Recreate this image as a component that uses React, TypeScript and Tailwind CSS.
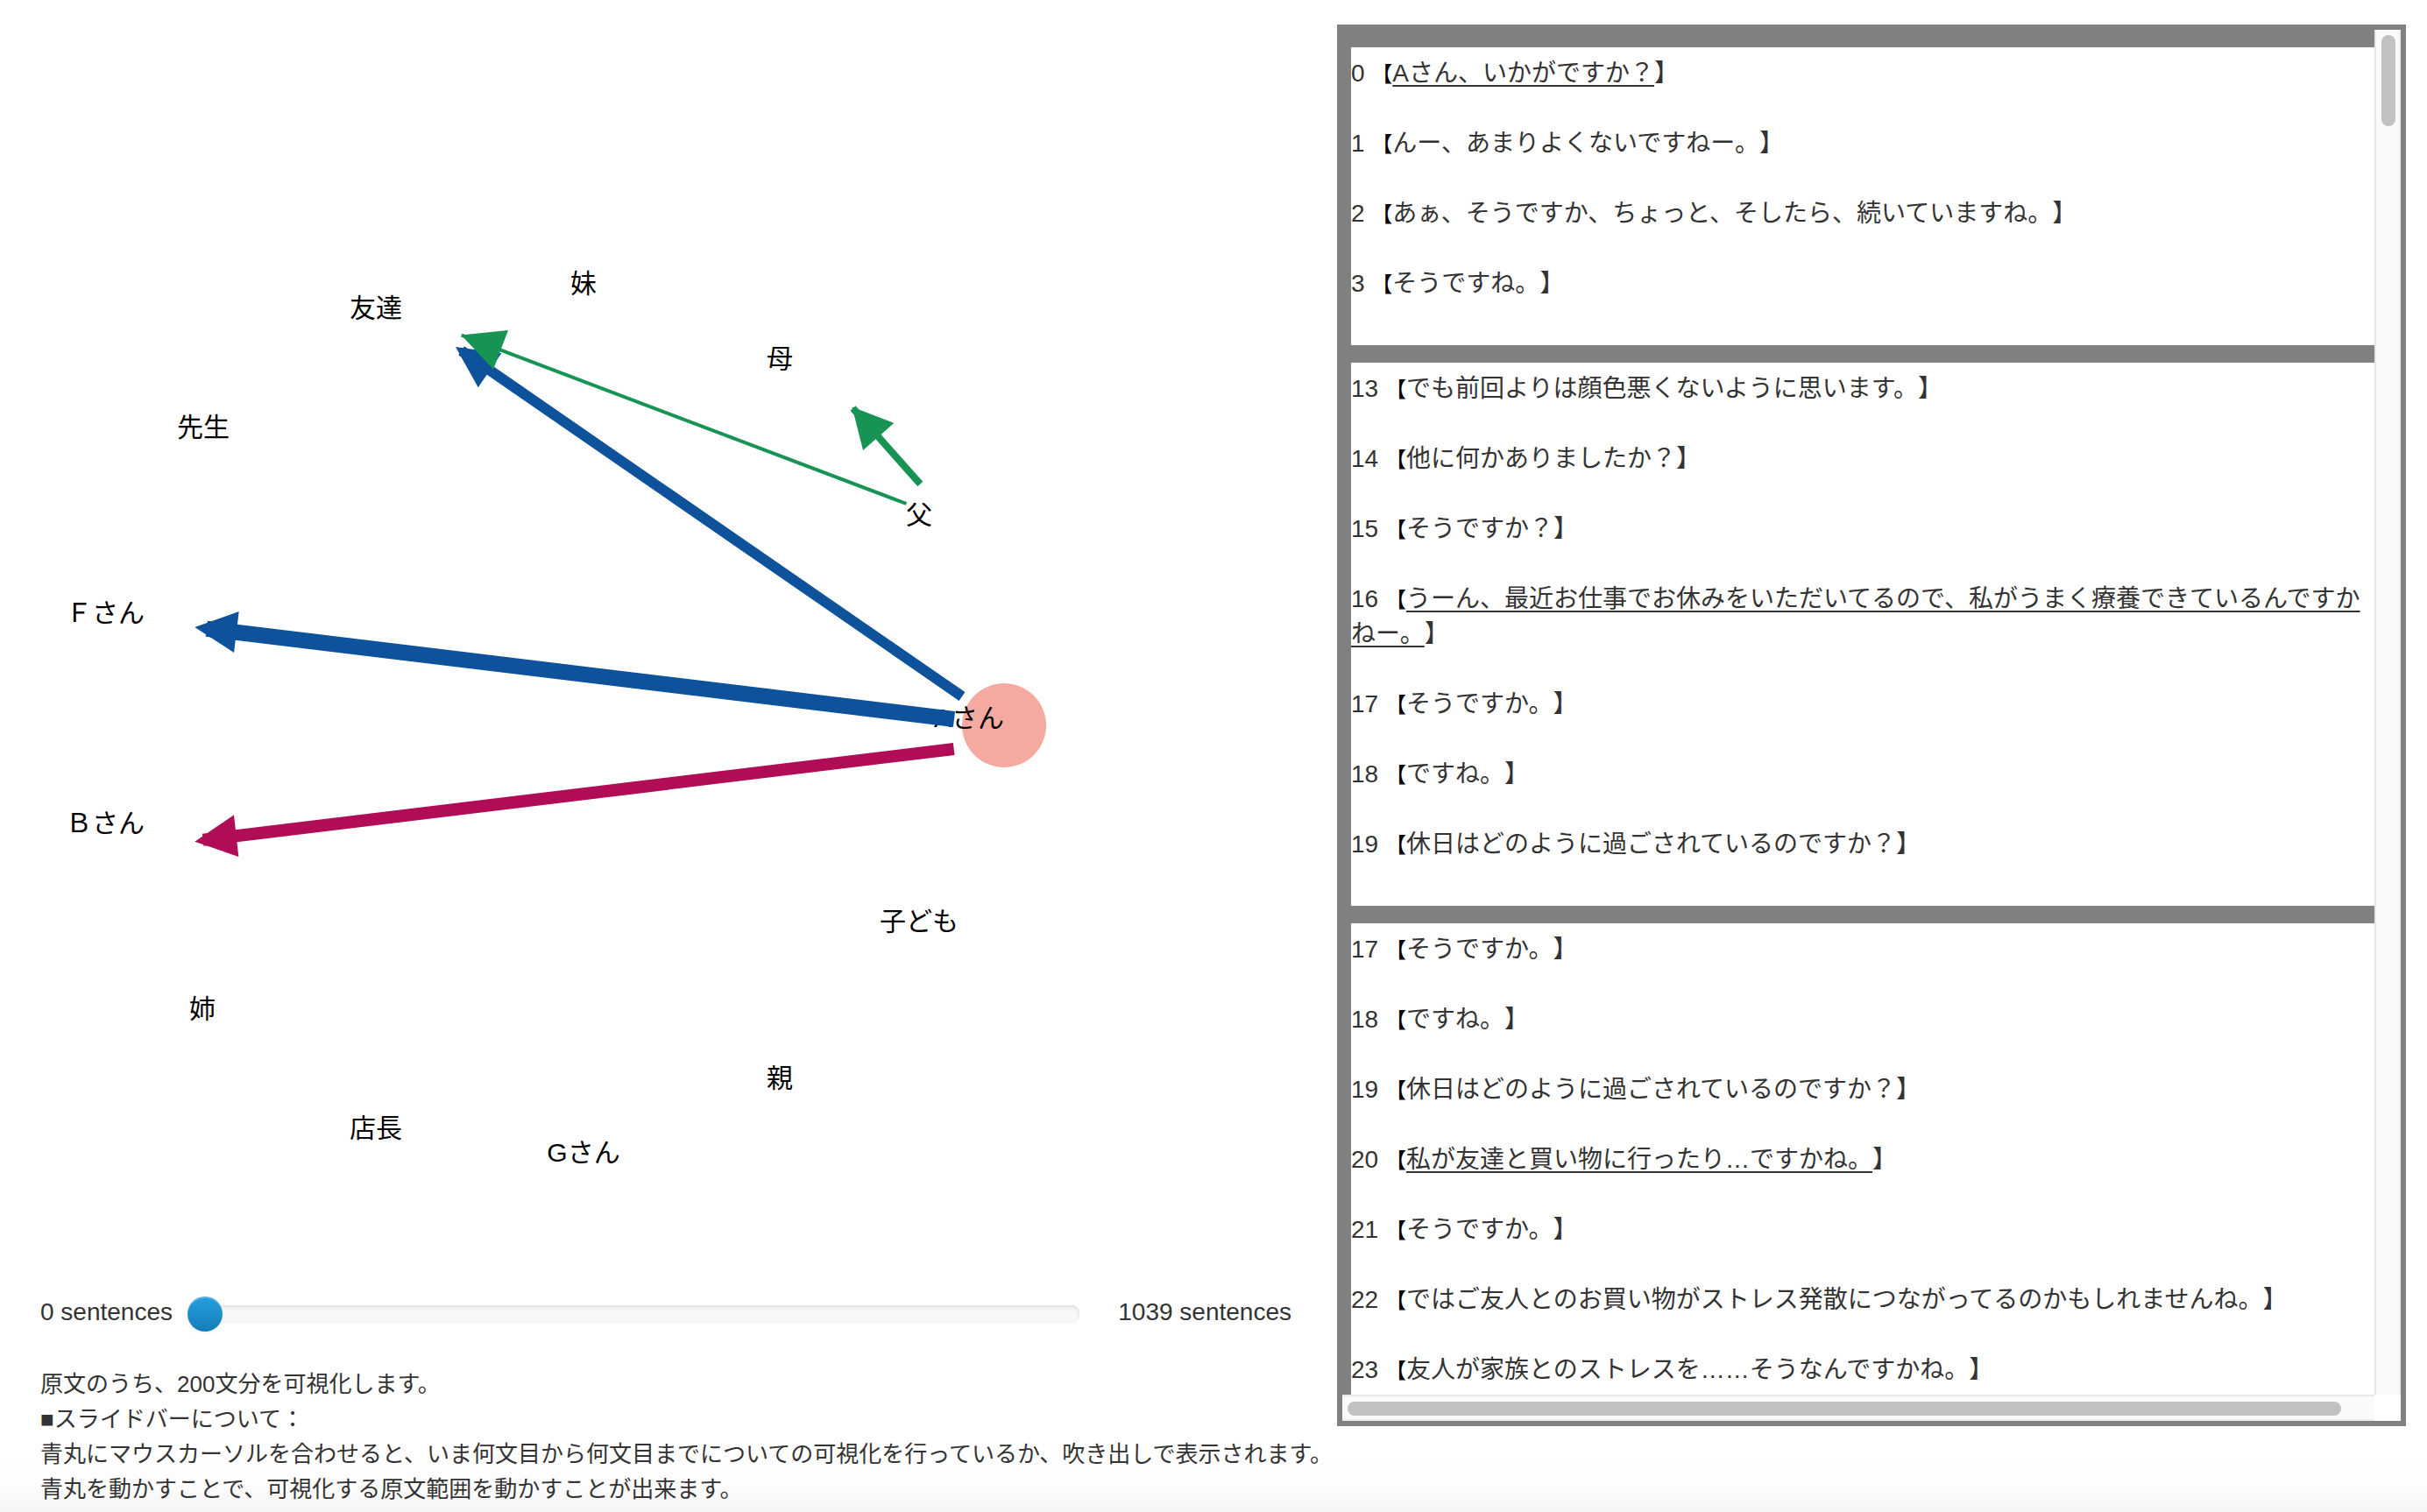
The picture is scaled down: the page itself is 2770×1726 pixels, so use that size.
import { useState } from "react";

type Sentence = { id: number; text: string; marked?: boolean };

const excerpts: Sentence[][] = [
  [
    { id: 0, text: "Aさん、いかがですか？", marked: true },
    { id: 1, text: "んー、あまりよくないですねー。" },
    { id: 2, text: "あぁ、そうですか、ちょっと、そしたら、続いていますね。" },
    { id: 3, text: "そうですね。" },
  ],
  [
    { id: 13, text: "でも前回よりは顔色悪くないように思います。" },
    { id: 14, text: "他に何かありましたか？" },
    { id: 15, text: "そうですか？" },
    {
      id: 16,
      text: "うーん、最近お仕事でお休みをいただいてるので、私がうまく療養できているんですかねー。",
      marked: true,
    },
    { id: 17, text: "そうですか。" },
    { id: 18, text: "ですね。" },
    { id: 19, text: "休日はどのように過ごされているのですか？" },
  ],
  [
    { id: 17, text: "そうですか。" },
    { id: 18, text: "ですね。" },
    { id: 19, text: "休日はどのように過ごされているのですか？" },
    { id: 20, text: "私が友達と買い物に行ったり…ですかね。", marked: true },
    { id: 21, text: "そうですか。" },
    { id: 22, text: "ではご友人とのお買い物がストレス発散につながってるのかもしれませんね。" },
    { id: 23, text: "友人が家族とのストレスを……そうなんですかね。" },
  ],
];

const people = [
  { name: "妹", x: 666, y: 334 },
  { name: "友達", x: 429, y: 362 },
  { name: "母", x: 890, y: 420 },
  { name: "先生", x: 232, y: 498 },
  { name: "父", x: 1049, y: 598 },
  { name: "Ｆさん", x: 120, y: 710 },
  { name: "Aさん", x: 1106, y: 830 },
  { name: "Ｂさん", x: 120, y: 950 },
  { name: "子ども", x: 1049, y: 1062 },
  { name: "姉", x: 231, y: 1162 },
  { name: "親", x: 890, y: 1241 },
  { name: "店長", x: 429, y: 1298 },
  { name: "Gさん", x: 666, y: 1326 },
];

const arrows = [
  { color: "#0d529a", width: 12, line: "M1098 795L526.6 400.3", head: "520,396 572.3,403.3 545.7,442.3" },
  { color: "#0d529a", width: 18, line: "M1089 821L235.8 717.7", head: "222.3,716 272.7,698 267,745" },
  { color: "#b10c56", width: 14, line: "M1088.7 855L231.7 958.8", head: "222.3,960.7 267,930.3 272.3,978" },
  { color: "#179353", width: 4, line: "M1034.5 575L526.8 382.7", head: "526.3,382.5 580,377 563,421.5" },
  { color: "#179353", width: 8, line: "M1050.3 552.5L973.5 466", head: "972.5,464.5 1020.3,483 985,514" },
];

function RelationGraph() {
  return (
    <svg viewBox="0 0 1526 1480" className="block h-auto w-full" role="img" aria-label="人物関係図">
      <circle cx="1146" cy="828" r="48" fill="#f5aaa1" />
      <g fontSize="30" textAnchor="middle" fill="#000">
        {people.map((p) => (
          <text key={p.name} x={p.x} y={p.y}>
            {p.name}
          </text>
        ))}
      </g>
      {arrows.map((a) => (
        <g key={a.line}>
          <path d={a.line} stroke={a.color} strokeWidth={a.width} />
          <polygon points={a.head} fill={a.color} />
        </g>
      ))}
    </svg>
  );
}

function RangeControl() {
  const [start, setStart] = useState(0);
  return (
    <div className="flex h-10 items-start pr-[52px] pl-[46px] text-[28px] leading-9">
      <label htmlFor="range" className="mr-[17px] whitespace-nowrap">
        0 sentences
      </label>
      <div className="relative h-10 flex-1">
        <div className="mx-5 mt-2.5 h-5 rounded-lg bg-[#f7f7f7] shadow-[inset_0_2px_4px_rgba(0,0,0,0.1)]" />
        <input
          id="range"
          type="range"
          min={0}
          max={1039}
          value={start}
          onChange={(e) => setStart(Number(e.target.value))}
          className="absolute inset-0 h-10 w-full cursor-pointer appearance-none bg-transparent [&::-webkit-slider-thumb]:h-10 [&::-webkit-slider-thumb]:w-10 [&::-webkit-slider-thumb]:appearance-none [&::-webkit-slider-thumb]:rounded-full [&::-webkit-slider-thumb]:bg-linear-to-b [&::-webkit-slider-thumb]:from-[#259fde] [&::-webkit-slider-thumb]:to-[#157db9] [&::-webkit-slider-thumb]:shadow-[inset_0_2px_0_rgba(255,255,255,0.2),0_2px_4px_rgba(0,0,0,0.05)]"
        />
      </div>
      <span className="ml-6 whitespace-nowrap">1039 sentences</span>
    </div>
  );
}

function Excerpt({ sentences }: { sentences: Sentence[] }) {
  return (
    <section className="mb-5 bg-white py-2.5">
      {sentences.map((s) => (
        <p key={s.id} className="pb-10">
          {s.id} <span className="text-[24px] leading-none text-black">【</span>
          <span className={s.marked ? "underline decoration-2 underline-offset-4" : ""}>{s.text}</span>】
        </p>
      ))}
    </section>
  );
}

function SourcePanel() {
  return (
    <div className="mt-7 mr-6 grid h-[1600px] grid-cols-[minmax(0,1fr)_30px] grid-rows-[minmax(0,1fr)_30px] border-6 border-[#808080] bg-white">
      <div className="overflow-y-auto bg-[#808080] pt-5 pl-2.5 text-[28px] leading-10 [scrollbar-width:none]">
        {excerpts.map((sentences, i) => (
          <Excerpt key={i} sentences={sentences} />
        ))}
      </div>
      <div className="border-r-2 border-l-2 border-r-[#ededed] border-l-[#e7e7e7] bg-[#fafafa] px-1.5 py-1.5">
        <div className="h-[104px] w-4 rounded-full bg-[#c1c1c1]" />
      </div>
      <div className="border-t-2 border-b-2 border-t-[#e7e7e7] border-b-[#ededed] bg-[#fafafa] py-1.5 pr-[38px] pl-1.5">
        <div className="h-4 rounded-full bg-[#c1c1c1]" />
      </div>
      <div className="bg-white" />
    </div>
  );
}

export default function App() {
  return (
    <main className="grid min-h-screen grid-cols-[1526fr_1244fr] bg-[linear-gradient(to_top,#f5f5f5,#fcfcfc_30px,#fff_70px)] font-['Liberation_Sans','Noto_Sans_CJK_JP',sans-serif] text-[#333] [text-spacing-trim:space-all]">
      <div className="min-w-0">
        <RelationGraph />
        <RangeControl />
        <p className="mt-10 pl-[46px] text-[26px] leading-10 whitespace-nowrap">
          原文のうち、200文分を可視化します。
          <br />
          ■スライドバーについて：
          <br />
          青丸にマウスカーソルを合わせると、いま何文目から何文目までについての可視化を行っているか、吹き出しで表示されます。
          <br />
          青丸を動かすことで、可視化する原文範囲を動かすことが出来ます。
        </p>
      </div>
      <SourcePanel />
    </main>
  );
}
